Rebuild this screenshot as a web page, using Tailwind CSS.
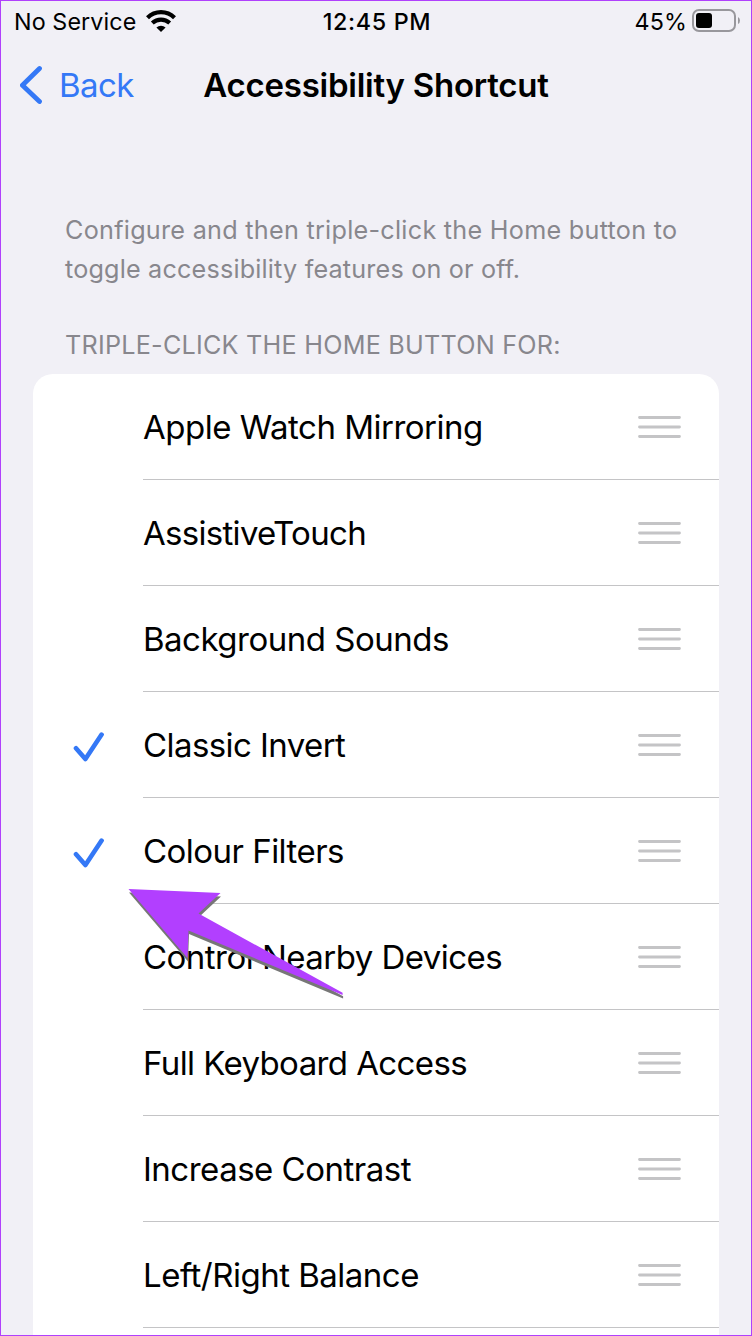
<!DOCTYPE html>
<html lang="en">
<head>
<meta charset="utf-8">
<title>Accessibility Shortcut</title>
<script src="https://cdn.jsdelivr.net/npm/@tailwindcss/browser@4"></script>
</head>
<body class="bg-[#f1f0f6]">
<svg class="hidden">
  <symbol id="grip" viewBox="0 0 43 24"><path d="M1.5 2.5h40M1.5 12h40M1.5 21.5h40" stroke="#c4c4c6" stroke-width="2.8" stroke-linecap="round"/></symbol>
  <symbol id="check" viewBox="0 0 32 32"><path d="M4 17.2L13.400 28L29.600 3.6" fill="none" stroke="#3478f6" stroke-width="4.6" stroke-linecap="round" stroke-linejoin="round"/></symbol>
</svg>
<div class="relative flex h-[1336px] w-[752px] flex-col overflow-hidden bg-[#f1f0f6] font-['Inter',sans-serif] text-black">
  <header class="grid h-11 shrink-0 grid-cols-[1fr_auto_1fr] items-center pl-[14px] pr-3 text-[23.3px] leading-none">
    <div class="flex items-center">
      <span class="tracking-[0.1px]">No Service</span>
      <svg class="mb-[2px] ml-[10px] h-[22px] w-[30px]" viewBox="0 0 30 22" fill="none" stroke="#000" stroke-width="4.200">
        <path d="M1.500 7.700a19.300 19.300 0 0 1 27 0"/><path d="M6.300 13a13 13 0 0 1 17.400 0"/><path d="M15 22l-4.600-4.600a7 7 0 0 1 9.200 0z" fill="#000" stroke="none"/>
      </svg>
    </div>
    <span class="font-medium tracking-[0.65px]">12:45 PM</span>
    <div class="flex items-center justify-end gap-[5px]">
      <span class="tracking-[0.1px]">45%</span>
      <svg class="mb-[2px] h-6 w-12" viewBox="0 0 48 24"><rect x="1" y="1" width="42" height="21" rx="6" fill="none" stroke="#98979c" stroke-width="2"/><rect x="4" y="4" width="16" height="15" rx="3"/><path d="M46 8q2 1 2 3.500t-2 3.500z" fill="#98979c"/></svg>
    </div>
  </header>
  <nav class="grid h-[82px] shrink-0 grid-cols-[1fr_auto_1fr] items-center px-5 text-[33px] leading-none">
    <a class="flex items-center text-[#3478f6]">
      <svg class="h-10 w-6" viewBox="0 0 24 40" fill="none" stroke="currentColor" stroke-width="4.800" stroke-linecap="round" stroke-linejoin="round"><path d="M19.500 3.500L2.400 20.200L19.500 36.500"/></svg>
      <span class="ml-[15px] tracking-[-0.6px]">Back</span>
    </a>
    <h1 class="font-semibold tracking-[-0.25px]">Accessibility Shortcut</h1>
  </nav>
  <main class="flex shrink-0 flex-col px-[33px] pt-[85px]">
    <p class="px-8 text-[25.2px] leading-[39px] tracking-[0.27px] whitespace-nowrap text-[#88878d]">Configure and then triple-click the Home button to<br><span class="tracking-[0.18px]">toggle accessibility features on or off.</span></p>
    <h2 class="mt-[37px] mb-[9px] px-8 text-[25.2px] leading-[39px] tracking-[0.23px] whitespace-nowrap text-[#88878d]">TRIPLE-CLICK THE HOME BUTTON FOR:</h2>
    <ul class="flex w-[686px] flex-col rounded-t-[20px] bg-white text-[33px] leading-none tracking-[-0.5px]">
      <li class="flex h-[106px] pl-[110px]"><div class="flex flex-1 items-center justify-between border-b border-[#c4c4c6] pr-[38px]"><span class="pt-[2px]">Apple Watch Mirroring</span><svg class="h-6 w-[43px]"><use href="#grip"/></svg></div></li>
      <li class="flex h-[106px] pl-[110px]"><div class="flex flex-1 items-center justify-between border-b border-[#c4c4c6] pr-[38px]"><span class="pt-[2px] tracking-[-0.7px]">AssistiveTouch</span><svg class="h-6 w-[43px]"><use href="#grip"/></svg></div></li>
      <li class="flex h-[106px] pl-[110px]"><div class="flex flex-1 items-center justify-between border-b border-[#c4c4c6] pr-[38px]"><span class="pt-[2px]">Background Sounds</span><svg class="h-6 w-[43px]"><use href="#grip"/></svg></div></li>
      <li class="flex h-[106px] items-center pl-[39px]"><svg class="mt-[3px] mr-[39px] h-8 w-8"><use href="#check"/></svg><div class="flex flex-1 items-center justify-between self-stretch border-b border-[#c4c4c6] pr-[38px]"><span class="pt-[2px] tracking-[-0.58px]">Classic Invert</span><svg class="h-6 w-[43px]"><use href="#grip"/></svg></div></li>
      <li class="flex h-[106px] items-center pl-[39px]"><svg class="mt-[3px] mr-[39px] h-8 w-8"><use href="#check"/></svg><div class="flex flex-1 items-center justify-between self-stretch border-b border-[#c4c4c6] pr-[38px]"><span class="pt-[2px] tracking-[-0.53px]">Colour Filters</span><svg class="h-6 w-[43px]"><use href="#grip"/></svg></div></li>
      <li class="flex h-[106px] pl-[110px]"><div class="flex flex-1 items-center justify-between border-b border-[#c4c4c6] pr-[38px]"><span class="pt-[2px] tracking-[-0.53px]">Control Nearby Devices</span><svg class="h-6 w-[43px]"><use href="#grip"/></svg></div></li>
      <li class="flex h-[106px] pl-[110px]"><div class="flex flex-1 items-center justify-between border-b border-[#c4c4c6] pr-[38px]"><span class="pt-[2px] tracking-[-0.6px]">Full Keyboard Access</span><svg class="h-6 w-[43px]"><use href="#grip"/></svg></div></li>
      <li class="flex h-[106px] pl-[110px]"><div class="flex flex-1 items-center justify-between border-b border-[#c4c4c6] pr-[38px]"><span class="pt-[2px]">Increase Contrast</span><svg class="h-6 w-[43px]"><use href="#grip"/></svg></div></li>
      <li class="flex h-[106px] pl-[110px]"><div class="flex flex-1 items-center justify-between border-b border-[#c4c4c6] pr-[38px]"><span class="pt-[2px]">Left/Right Balance</span><svg class="h-6 w-[43px]"><use href="#grip"/></svg></div></li>
      <li class="h-[106px]"></li>
    </ul>
  </main>
  <svg class="absolute top-[880px] left-[120px] h-[130px] w-[240px]" viewBox="120 880 240 130">
    <path d="M128.500 889L220.500 893L198.500 913.500L342.600 992.800L342.600 995L188.500 930.500L187.500 958z" fill="#777" transform="translate(0.500 3.500)"/>
    <path d="M128.500 889L220.500 893L198.500 913.500L342.600 992.800L342.600 995L188.500 930.500L187.500 958z" fill="#b23fff"/>
  </svg>
  <div class="pointer-events-none absolute inset-0 border border-[#b040fc]"></div>
</div>
</body>
</html>
